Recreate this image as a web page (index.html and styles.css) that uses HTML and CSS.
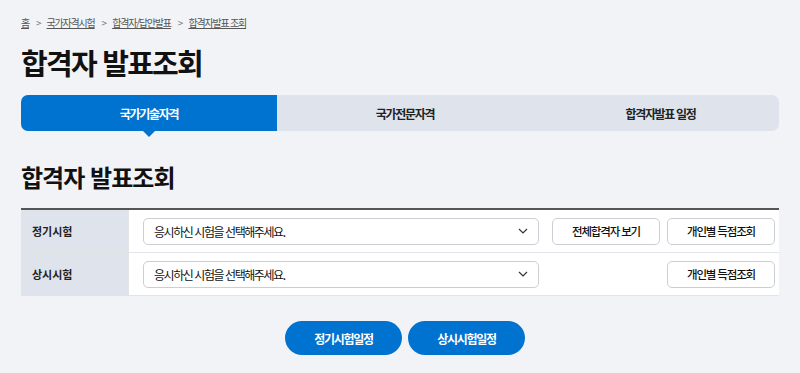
FILE: index.html
```html
<!DOCTYPE html>
<html lang="ko">
<head>
<meta charset="utf-8">
<title>합격자 발표조회</title>
<link rel="stylesheet" href="styles.css">
</head>
<body>
<div class="page">
  <nav class="crumbs">
    <a href="#">홈</a><span class="sep">&gt;</span>
    <a href="#">국가자격시험</a><span class="sep">&gt;</span>
    <a href="#">합격자/답안발표</a><span class="sep">&gt;</span>
    <a href="#">합격자발표 조회</a>
  </nav>
  <h1 class="title">합격자 발표조회</h1>
  <div class="tabs">
    <a class="tab active" href="#">국가기술자격</a>
    <a class="tab" href="#">국가전문자격</a>
    <a class="tab last" href="#">합격자발표 일정</a>
  </div>
  <h2 class="subtitle">합격자 발표조회</h2>
  <div class="table">
    <div class="row">
      <div class="th">정기시험</div>
      <div class="td">
        <div class="select"><span>응시하신 시험을 선택해주세요.</span>
          <svg class="chev" width="10" height="6" viewBox="0 0 10 6"><path d="M1 1l4 4 4-4" fill="none" stroke="#333" stroke-width="1.2"/></svg>
        </div>
        <button class="btn">전체합격자 보기</button>
        <button class="btn">개인별 득점조회</button>
      </div>
    </div>
    <div class="row">
      <div class="th">상시시험</div>
      <div class="td">
        <div class="select"><span>응시하신 시험을 선택해주세요.</span>
          <svg class="chev" width="10" height="6" viewBox="0 0 10 6"><path d="M1 1l4 4 4-4" fill="none" stroke="#333" stroke-width="1.2"/></svg>
        </div>
        <span class="btn-gap"></span>
        <button class="btn">개인별 득점조회</button>
      </div>
    </div>
  </div>
  <div class="actions">
    <button class="pill">정기시험일정</button>
    <button class="pill">상시시험일정</button>
  </div>
</div>
</body>
</html>
```

FILE: styles.css
```css
* { box-sizing: border-box; }
html, body { margin: 0; padding: 0; }
body {
  background: #f2f3f7;
  font-family: "Noto Sans CJK KR", "Noto Sans", sans-serif;
  color: #111;
}
.page { padding: 14px 21px 0 21px; }
.crumbs {
  display: flex;
  align-items: center;
  height: 16px;
  font-size: 10px;
  letter-spacing: -0.12em;
  color: #555;
}
.crumbs a { color: #555; text-decoration: underline; }
.crumbs .sep { margin: 0 5px 0 7px; font-size: 10px; color: #777; letter-spacing: 0; }
.title {
  margin: 12px 0 0 0;
  font-size: 29px;
  line-height: 40px;
  font-weight: 700;
  letter-spacing: -0.06em;
}
.tabs {
  display: grid;
  grid-template-columns: 256px 256px 1fr;
  margin-top: 13px;
  height: 36px;
  background: #dfe3ec;
  border-radius: 7px;
}
.tab {
  display: flex;
  align-items: center;
  justify-content: center;
  font-size: 12px;
  font-weight: 700;
  letter-spacing: -0.11em;
  color: #222;
  text-decoration: none;
  position: relative;
}
.tab.last { padding-left: 9px; }
.tab.active {
  background: #0073d0;
  color: #fff;
  border-radius: 7px 0 0 7px;
}
.tab.active::after {
  content: "";
  position: absolute;
  left: 50%;
  bottom: -6px;
  margin-left: -6px;
  border-left: 6px solid transparent;
  border-right: 6px solid transparent;
  border-top: 6px solid #0073d0;
}
.subtitle {
  margin: 30px 0 0 0;
  font-size: 24px;
  line-height: 32px;
  font-weight: 700;
  letter-spacing: -0.04em;
}
.table {
  margin-top: 15px;
  border-top: 2px solid #555;
  background: #fff;
}
.row {
  display: flex;
  height: 43px;
  border-bottom: 1px solid #e2e4e8;
}
.th {
  width: 108px;
  background: #dfe3ec;
  display: flex;
  align-items: center;
  padding-left: 11px;
  font-size: 11px;
  font-weight: 700;
  letter-spacing: 0;
  color: #222;
  border-right: 1px solid #e2e4e8;
}
.td {
  flex: 1;
  display: flex;
  align-items: center;
  padding-left: 14px;
  gap: 7px;
}
.select {
  width: 396px;
  height: 27px;
  border: 1px solid #ccced3;
  border-radius: 5px;
  background: #fff;
  display: flex;
  align-items: center;
  justify-content: space-between;
  padding: 0 10px 0 10px;
  font-size: 12px;
  letter-spacing: -0.12em;
  color: #111;
  margin-right: 6px;
}
.chev { display: block; }
.btn {
  width: 108px;
  height: 27px;
  border: 1px solid #ccced3;
  border-radius: 5px;
  background: #fff;
  font-family: inherit;
  font-size: 11.5px;
  font-weight: 500;
  letter-spacing: -0.1em;
  color: #111;
  padding: 0;
}
.btn-gap { width: 108px; }
.actions {
  display: flex;
  justify-content: center;
  gap: 6px;
  margin-top: 25px;
  padding-left: 10px;
}
.pill {
  width: 117px;
  height: 34px;
  border: none;
  border-radius: 17px;
  background: #0073d0;
  color: #fff;
  font-family: inherit;
  font-size: 12px;
  font-weight: 700;
  letter-spacing: -0.11em;
  padding: 0;
}
```
